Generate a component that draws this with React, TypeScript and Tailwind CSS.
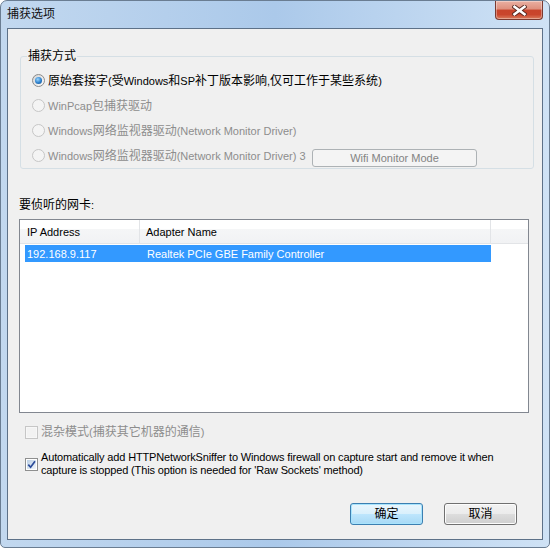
import React from "react";

const FONT = "font-['Liberation_Sans','Noto_Sans_CJK_SC',sans-serif]";

// Chinese runs get 12px, Latin runs stay at 11px (matches the dialog font widths)
function T({ children }: { children: string }) {
  const parts = children.split(/([\u3000-\u9fff\uff00-\uffef]+)/);
  return (
    <>
      {parts.map((p, i) =>
        i % 2 === 1 ? (
          <span key={i} className="text-[12px]">
            {p}
          </span>
        ) : (
          <React.Fragment key={i}>{p}</React.Fragment>
        )
      )}
    </>
  );
}

function Radio({ checked = false, disabled = false }: { checked?: boolean; disabled?: boolean }) {
  return (
    <span
      className={`flex h-[13px] w-[13px] shrink-0 items-center justify-center rounded-full border ${
        disabled
          ? "border-[#c6c6c6] bg-[#f4f4f4]"
          : "border-[#8b8b8b] bg-gradient-to-br from-[#d4d4d4] to-[#fcfcfc]"
      }`}
    >
      {checked && (
        <span className="h-[7px] w-[7px] rounded-full bg-[radial-gradient(circle_at_40%_35%,#9ad6ff,#2b7fcb_55%,#104785)]" />
      )}
    </span>
  );
}

function Checkbox({ checked = false, disabled = false }: { checked?: boolean; disabled?: boolean }) {
  return (
    <span
      className={`flex h-[13px] w-[13px] shrink-0 items-center justify-center border ${
        disabled ? "border-[#c6c6c6] bg-[#f7f7f7]" : "border-[#8e8f8f] bg-white"
      }`}
    >
      <span
        className={`flex h-[9px] w-[9px] items-center justify-center ${
          disabled ? "bg-[#f2f2f2]" : "bg-gradient-to-br from-[#bcd0e6] to-[#f1f6fb]"
        }`}
      >
        {checked && (
          <svg width="9" height="9" viewBox="0 0 9 9">
            <path d="M1.3 4.6 L3.6 7.2 L8 1.2" fill="none" stroke="#2a4b9a" strokeWidth="1.7" />
          </svg>
        )}
      </span>
    </span>
  );
}

function CloseButton() {
  return (
    <div className="flex h-[19px] w-[48px] items-center justify-center rounded-b-[4px] border border-t-0 border-[#7b3a30] bg-[linear-gradient(to_bottom,#eab0a2_0%,#de8f7d_45%,#c8442b_50%,#c9452c_75%,#d97b5c_100%)] shadow-[inset_0_0_0_1px_rgba(255,255,255,0.35)]">
      <svg width="15" height="11" viewBox="0 0 15 11">
        <path d="M2.5 1.8 L12.5 9.2 M12.5 1.8 L2.5 9.2" stroke="#5a2a22" strokeWidth="4.4" strokeLinecap="square" />
        <path d="M2.5 1.8 L12.5 9.2 M12.5 1.8 L2.5 9.2" stroke="#ffffff" strokeWidth="2.6" strokeLinecap="square" />
      </svg>
    </div>
  );
}

export default function App() {
  return (
    <div
      className={`flex h-[548px] w-[550px] flex-col overflow-hidden rounded-t-[7px] rounded-b-[5px] border border-[#6a7d92] bg-gradient-to-r from-[#c2d8ef] via-[#abc9ea] to-[#cfe2f5] text-[11px] text-black ${FONT}`}
    >
      {/* title bar */}
      <div className="flex h-[27px] shrink-0 items-start justify-between">
        <span className="pl-[6px] pt-[5px] text-[12px] leading-[16px] text-[#111]">捕获选项</span>
        <div className="mr-[6px]">
          <CloseButton />
        </div>
      </div>

      {/* client area */}
      <div className="mx-[6px] mb-[7px] flex flex-1 flex-col border border-[#5d7188] bg-[#f0f0f0]">
        <fieldset className="ml-[12px] mr-[8px] mt-[20px] rounded-[3px] border border-[#d5dfe5] px-0 pb-0">
          <legend className="ml-[6px] px-[1px] text-[12px] leading-[14px]">捕获方式</legend>
          <div className="flex flex-col pl-[11px] pt-[5px]">
            <div className="flex h-[25px] items-center gap-[3px]">
              <Radio checked />
              <span className="leading-[14px]">
                <T>原始套接字(受Windows和SP补丁版本影响,仅可工作于某些系统)</T>
              </span>
            </div>
            <div className="flex h-[25px] items-center gap-[3px] text-[#8d8d8d]">
              <Radio disabled />
              <span className="leading-[14px]">
                <T>WinPcap包捕获驱动</T>
              </span>
            </div>
            <div className="flex h-[25px] items-center gap-[3px] text-[#8d8d8d]">
              <Radio disabled />
              <span className="leading-[14px]">
                <T>Windows网络监视器驱动(Network Monitor Driver)</T>
              </span>
            </div>
            <div className="flex h-[25px] items-center gap-[3px] text-[#8d8d8d]">
              <Radio disabled />
              <span className="w-[261px] whitespace-nowrap leading-[14px]">
                <T>Windows网络监视器驱动(Network Monitor Driver) 3</T>
              </span>
              <button className="mt-[4px] flex h-[18px] w-[165px] items-center justify-center rounded-[3px] border border-[#adb2b5] bg-[#f4f4f4] leading-[14px] text-[#838383]">
                Wifi Monitor Mode
              </button>
            </div>
          </div>
        </fieldset>

        <div className="ml-[11px] mt-[29px] leading-[14px]">
          <T>要侦听的网卡:</T>
        </div>

        <div className="ml-[11px] mt-[7px] flex h-[194px] w-[510px] flex-col border border-[#828790] bg-white">
          <div className="flex h-[24px] border-b border-[#e2e4e7] bg-[linear-gradient(to_bottom,#ffffff_0%,#ffffff_40%,#f5f6f7_40%,#f1f2f4_100%)]">
            <div className="flex w-[120px] items-center border-r border-[#e2e4e7] pl-[7px] leading-[14px]">IP Address</div>
            <div className="flex w-[351px] items-center border-r border-[#e2e4e7] pl-[6px] leading-[14px]">
              Adapter Name
            </div>
          </div>
          <div className="ml-[5px] mt-[1px] flex h-[17px] w-[466px] items-center bg-[#3399ff] text-white">
            <span className="w-[115px] pl-[2px] leading-[14px]">192.168.9.117</span>
            <span className="pl-[7px] leading-[14px]">Realtek PCIe GBE Family Controller</span>
          </div>
        </div>

        <div className="ml-[17px] mt-[13px] flex h-[13px] items-center gap-[3px] text-[#8d8d8d]">
          <Checkbox disabled />
          <span className="leading-[13px]">
            <T>混杂模式(捕获其它机器的通信)</T>
          </span>
        </div>

        <div className="ml-[17px] mt-[12px] flex items-center gap-[3px]">
          <Checkbox checked />
          <span className="whitespace-nowrap leading-[13px] tracking-[-0.15px]">
            Automatically add HTTPNetworkSniffer to Windows firewall on capture start and remove it when
            <br />
            capture is stopped (This option is needed for 'Raw Sockets' method)
          </span>
        </div>

        <div className="mb-[14px] mr-[25px] mt-auto flex justify-end gap-[21px]">
          <button className="flex h-[22px] w-[73px] items-center justify-center rounded-[3px] border border-[#3c7fb1] bg-[linear-gradient(to_bottom,#eaf6fd_0%,#d9f0fc_50%,#bee6fd_50%,#a7d9f5_100%)] text-[12px] leading-[14px] shadow-[inset_0_0_0_1px_#a8e4fd]">
            确定
          </button>
          <button className="flex h-[22px] w-[73px] items-center justify-center rounded-[3px] border border-[#707070] bg-[linear-gradient(to_bottom,#f2f2f2_0%,#ebebeb_50%,#dddddd_50%,#cfcfcf_100%)] text-[12px] leading-[14px] shadow-[inset_0_0_0_1px_#fcfcfc]">
            取消
          </button>
        </div>
      </div>
    </div>
  );
}
